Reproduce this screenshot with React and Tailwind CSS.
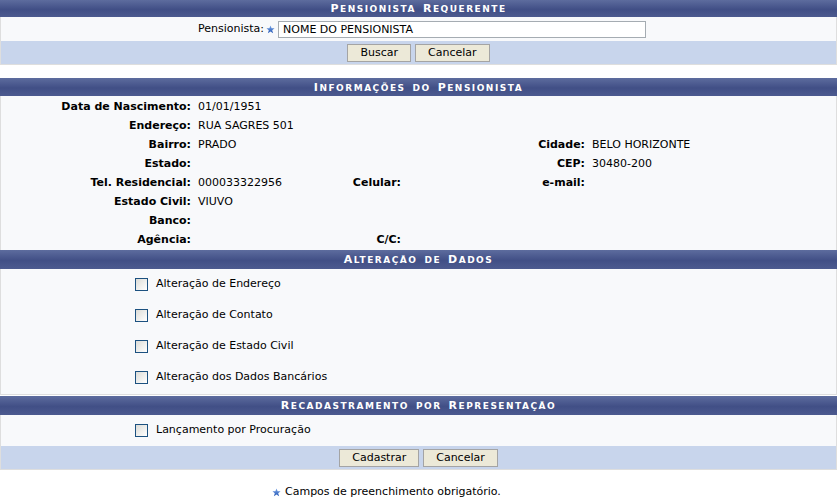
import { useState } from "react";

function Star({ className = "" }) {
  return (
    <svg viewBox="0 0 10 10" className={`w-[9px] h-[9px] ${className}`}>
      <defs>
        <linearGradient id="starFill" x1="0" y1="0" x2="0" y2="1">
          <stop offset="0" stopColor="#7aa6e8" />
          <stop offset="1" stopColor="#2456b4" />
        </linearGradient>
      </defs>
      <path
        d="M5 0.5 L6.2 3.6 L9.5 3.7 L6.9 5.8 L7.9 9.3 L5 7.3 L2.1 9.3 L3.1 5.8 L0.5 3.7 L3.8 3.6 Z"
        fill="url(#starFill)"
      />
    </svg>
  );
}

// small caps by hand: capitalised letters full size, the rest smaller
function Caption({ children, className = "h-[18px]" }) {
  const words = children.split(" ");
  return (
    <div
      className={`flex items-center justify-center gap-[7px] bg-[linear-gradient(to_bottom,#5d6c9e,#414f86_55%,#4c5a8f)] text-white font-bold tracking-[1.5px] uppercase leading-none ${className}`}
    >
      {words.map((w, i) => {
        const big = w[0] === w[0].toUpperCase();
        return (
          <span key={i}>
            {big && <span className="text-[11px]">{w[0]}</span>}
            <span className="text-[9px]">{big ? w.slice(1) : w}</span>
          </span>
        );
      })}
    </div>
  );
}

function Button({ children }) {
  return (
    <button className="h-[18px] px-[12px] bg-[#ece9d8] border border-[#a4a4a4] text-[11px] text-black leading-none">
      {children}
    </button>
  );
}

function Checkbox({ checked, onChange }) {
  return (
    <span
      onClick={onChange}
      className={`inline-block w-[13px] h-[13px] border border-[#1c5180] bg-[linear-gradient(135deg,#dcdcd7,#ffffff)] cursor-pointer ${
        checked ? "after:content-['✓'] after:text-[10px] after:leading-[11px] after:pl-[1px] after:text-[#21a121]" : ""
      }`}
    />
  );
}

function Label({ children }) {
  return <div className="text-right pr-[3px] font-bold">{children}</div>;
}

function Value({ children }) {
  return <div className="pl-[4px]">{children}</div>;
}

const opcoes = [
  "Alteração de Endereço",
  "Alteração de Contato",
  "Alteração de Estado Civil",
  "Alteração dos Dados Bancários",
];

export default function App() {
  const [marcados, setMarcados] = useState({});
  const [procuracao, setProcuracao] = useState(false);

  const toggle = (i) => setMarcados((m) => ({ ...m, [i]: !m[i] }));

  return (
    <div className="w-[838px] min-h-[498px] bg-white text-[11px] text-black font-['DejaVu_Sans','Liberation_Sans',sans-serif]">
      {/* Pensionista requerente */}
      <div className="w-[837px] border-b border-[#dedede]">
        <Caption className="h-[17px]">Pensionista Requerente</Caption>
        <div className="h-[24px] flex items-center bg-[#f8f9fb] border-x border-[#dedede]">
          <span className="w-[263px] text-right">Pensionista:</span>
          <Star className="ml-[2px] mr-[3px]" />
          <input
            type="text"
            defaultValue="NOME DO PENSIONISTA"
            className="w-[368px] h-[17px] border border-[#a5acb2] bg-white px-[4px] text-[11px] text-black outline-none"
          />
        </div>
        <div className="h-[23px] flex items-center justify-center gap-[4px] bg-[#c8d5ec] border-x border-[#dedede]">
          <Button>Buscar</Button>
          <Button>Cancelar</Button>
        </div>
      </div>

      {/* Dados do pensionista */}
      <div className="mt-[13px] w-[837px] border-b border-[#dedede]">
        <Caption>Informações do Pensionista</Caption>
        <div className="bg-[#f8f9fb] border-x border-[#dedede] pt-[2px] grid grid-cols-[193px_130px_80px_100px_84px_1fr] auto-rows-[19px] items-center">
          <Label>Data de Nascimento:</Label>
          <div className="col-span-5 pl-[4px]">01/01/1951</div>

          <Label>Endereço:</Label>
          <div className="col-span-5 pl-[4px]">RUA SAGRES 501</div>

          <Label>Bairro:</Label>
          <div className="col-span-3 pl-[4px]">PRADO</div>
          <Label>Cidade:</Label>
          <Value>BELO HORIZONTE</Value>

          <Label>Estado:</Label>
          <div className="col-span-3" />
          <Label>CEP:</Label>
          <Value>30480-200</Value>

          <Label>Tel. Residencial:</Label>
          <Value>000033322956</Value>
          <Label>Celular:</Label>
          <Value />
          <Label>e-mail:</Label>
          <Value />

          <Label>Estado Civil:</Label>
          <div className="col-span-5 pl-[4px]">VIUVO</div>

          <Label>Banco:</Label>
          <div className="col-span-5" />

          <Label>Agência:</Label>
          <Value />
          <Label>C/C:</Label>
          <div className="col-span-3" />
        </div>

        <Caption className="h-[19px]">Alteração de Dados</Caption>
        <div className="bg-[#f8f9fb] border-x border-[#dedede] pb-[1px]">
          {opcoes.map((o, i) => (
            <div key={o} className="h-[31px] flex items-center pl-[134px] gap-[8px]">
              <Checkbox checked={!!marcados[i]} onChange={() => toggle(i)} />
              <span>{o}</span>
            </div>
          ))}
        </div>

        <div className="border-t border-[#dedede] pt-[1px]">
          <Caption className="h-[19px]">Recadastramento por Representação</Caption>
        </div>
        <div className="h-[31px] flex items-center pl-[134px] gap-[8px] bg-[#f8f9fb] border-x border-[#dedede]">
          <Checkbox checked={procuracao} onChange={() => setProcuracao(!procuracao)} />
          <span>Lançamento por Procuração</span>
        </div>
        <div className="h-[23px] flex items-center justify-center gap-[4px] bg-[#c8d5ec] border-x border-[#dedede]">
          <Button>Cadastrar</Button>
          <Button>Cancelar</Button>
        </div>
      </div>

      <div className="mt-[14px] flex items-center pl-[272px] gap-[4px]">
        <Star />
        <span>Campos de preenchimento obrigatório.</span>
      </div>
    </div>
  );
}
